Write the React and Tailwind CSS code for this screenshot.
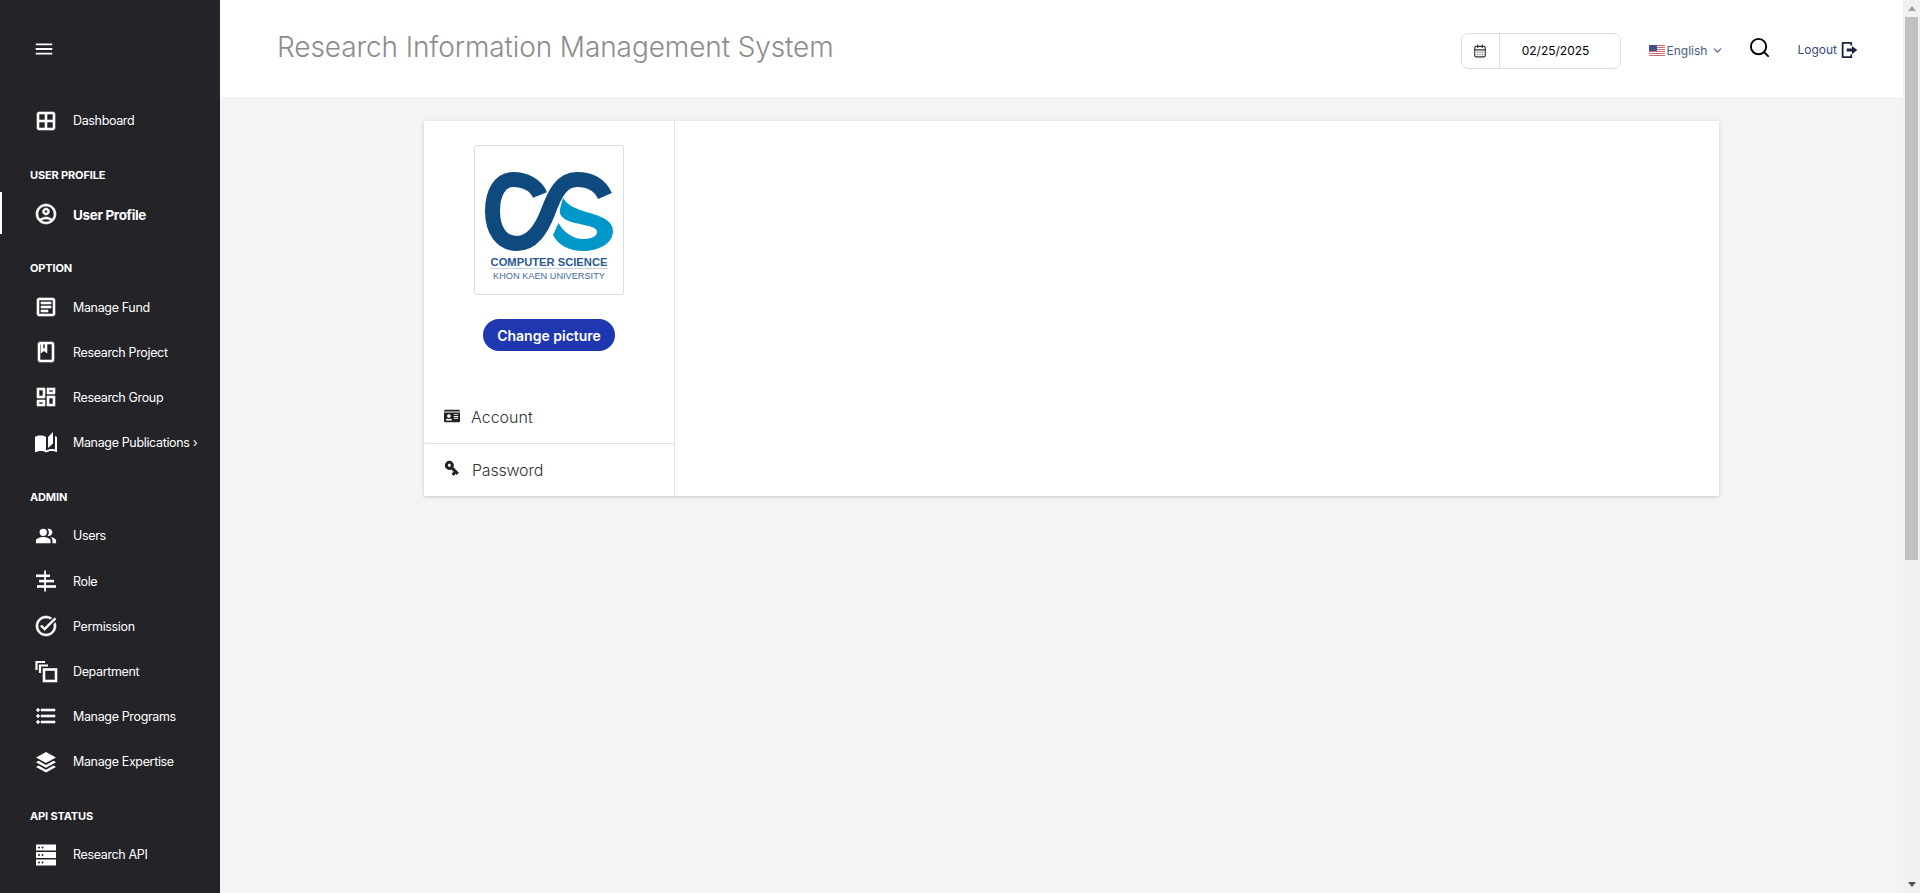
import {
  MdOutlineWindow,
  MdOutlineAccountCircle,
  MdOutlineArticle,
  MdOutlineBook,
  MdOutlineDashboard,
  MdAutoStories,
  MdPeopleAlt,
  MdOutlineTaskAlt,
  MdOutlineFormatListBulleted,
  MdMenu,
  MdVpnKey,
} from 'react-icons/md';
import { FaIdCard } from 'react-icons/fa';
import { Search, ChevronDown, CalendarDays } from 'lucide-react';

const RoleIcon = ({ className }) => (
  <svg viewBox="0 0 24 24" fill="currentColor" className={className}>
    <rect x="10.2" y="1.5" width="1.8" height="21" />
    <rect x="2" y="5.5" width="14" height="2.6" />
    <rect x="5" y="10.8" width="15" height="2.6" />
    <rect x="3" y="16.2" width="19" height="2.6" />
  </svg>
);

const DepartmentIcon = ({ className }) => (
  <svg viewBox="0 0 24 24" fill="none" stroke="currentColor" strokeWidth="2.2" className={className}>
    <path d="M2.5 11V3H11" />
    <path d="M6 14V6.5H14" />
    <rect x="10" y="10.5" width="12" height="11.5" strokeWidth="2.6" />
  </svg>
);

const ExpertiseIcon = ({ className }) => (
  <svg viewBox="0 0 24 24" fill="currentColor" className={className}>
    <path d="M12 2l10 5.5L12 13 2 7.5z" />
    <path d="M4.5 10.8L12 15l7.5-4.2L22 12.2 12 17.8 2 12.2z" />
    <path d="M4.5 15.6L12 19.8l7.5-4.2L22 17l-10 5.6L2 17z" />
  </svg>
);

const ApiIcon = ({ className }) => (
  <svg viewBox="0 0 24 24" className={className}>
    {[1.5, 9, 16.5].map((y) => (
      <g key={y}>
        <rect x="2" y={y} width="20" height="6" fill="#fff" />
        <circle cx="5" cy={y + 3} r="1" fill="#232328" />
        <circle cx="8.5" cy={y + 3} r="1" fill="#232328" />
      </g>
    ))}
  </svg>
);

const sidebar = [
  { items: [{ label: 'Dashboard', icon: MdOutlineWindow, bold: true }] },
  { title: 'USER PROFILE', items: [{ label: 'User Profile', icon: MdOutlineAccountCircle, active: true, bold: true }] },
  {
    title: 'OPTION',
    items: [
      { label: 'Manage Fund', icon: MdOutlineArticle, bold: true },
      { label: 'Research Project', icon: MdOutlineBook, bold: true },
      { label: 'Research Group', icon: MdOutlineDashboard, bold: true },
      { label: 'Manage Publications ›', icon: MdAutoStories },
    ],
  },
  {
    title: 'ADMIN',
    items: [
      { label: 'Users', icon: MdPeopleAlt, small: true },
      { label: 'Role', icon: RoleIcon },
      { label: 'Permission', icon: MdOutlineTaskAlt, bold: true },
      { label: 'Department', icon: DepartmentIcon },
      { label: 'Manage Programs', icon: MdOutlineFormatListBulleted, bold: true },
      { label: 'Manage Expertise', icon: ExpertiseIcon },
    ],
  },
  { title: 'API STATUS', items: [{ label: 'Research API', icon: ApiIcon }] },
];

const NavItem = ({ item }) => {
  const Icon = item.icon;
  return (
    <div className="relative flex h-[45.2px] items-center pl-[34px]">
      {item.active && <span className="absolute left-0 top-[1px] h-[42px] w-[2px] bg-white" />}
      <span className="flex h-[24px] w-[24px] shrink-0 items-center justify-center">
        <Icon className={`text-white ${item.small ? 'h-[22px] w-[22px]' : 'h-[24px] w-[24px]'} ${item.bold ? "[&_path:not([fill='none'])]:stroke-white [&_path:not([fill='none'])]:stroke-[0.6]" : ''}`} />
      </span>
      <span className={`ml-[15px] translate-y-[1px] whitespace-nowrap text-white ${item.active ? 'text-[13.5px] font-bold tracking-[-0.35px]' : 'text-[12.5px] tracking-[-0.35px]'}`}>
        {item.label}
      </span>
    </div>
  );
};

const Flag = () => (
  <svg width="16" height="12" viewBox="0 0 16 12" className="shrink-0">
    <rect width="16" height="12" fill="#fff" />
    {[0, 2, 4, 6, 8, 10].map((y) => (
      <rect key={y} y={y} width="16" height="1" fill="#d26a72" />
    ))}
    <rect width="8" height="6" fill="#45508a" />
  </svg>
);

const LogoutIcon = ({ className }) => (
  <svg viewBox="0 0 24 24" fill="none" className={className}>
    <path d="M15 5V2.5H3.5v19H15V19" stroke="currentColor" strokeWidth="2.4" strokeLinejoin="round" strokeLinecap="round" />
    <path d="M9 10h7V6.5l7 5.5-7 5.5V14H9z" fill="currentColor" />
  </svg>
);

const Logo = () => (
  <svg width="138" height="90" viewBox="0 0 138 90" className="block shrink-0">
    <path
      d="M60 30C56 20 45 14.5 33 14.5C20 14.5 12.5 28 12.5 46C12.5 66 22 78.5 37 78.5C52 78.5 61 65 68 47C75 28 82 14.5 97 14.5C110 14.5 120 20 125 31"
      fill="none"
      stroke="#0f4a7f"
      strokeWidth="15"
    />
    <path
      d="M83 33C88 41 97 44 106 47C122 51 133 56 133 66C133 79 118 86 103 86C89 86 78 80 73 70L78.5 58C84 68 94 74 103 74C112 74 117 71 117 67C117 62 108 61 100 59C90 57 78 54 80 44Z"
      fill="#0098c8"
    />
  </svg>
);

export default function App() {
  return (
    <div className="flex h-[893px] overflow-hidden bg-[#f3f4f6] font-['Inter',sans-serif]">
      <aside className="w-[220px] shrink-0 bg-[#232328]">
        <div className="flex h-[98px] items-center pl-[33px]">
          <MdMenu className="h-[22px] w-[22px] text-white" />
        </div>
        {sidebar.map((group) => (
          <div key={group.title || 'main'}>
            {group.title && (
              <div className="pb-[8px] pl-[30px] pt-[25px] text-[11px] font-bold leading-[15px] tracking-[-0.15px] text-white">{group.title}</div>
            )}
            {group.items.map((item) => (
              <NavItem key={item.label} item={item} />
            ))}
          </div>
        ))}
      </aside>

      <div className="min-w-0 flex-1">
        <header className="flex h-[97px] items-center bg-white pl-[57px] pr-[45px]">
          <h1 className="-translate-y-[2px] text-[28px] font-light tracking-[-0.1px] text-[#8f8b8b]">Research Information Management System</h1>
          <div className="ml-auto flex translate-y-[2px] items-center">
            <div className="flex h-[36px] w-[160px] items-center rounded-[7px] border border-[#dedede]">
              <div className="flex h-full w-[38px] items-center justify-center border-r border-[#dedede]">
                <CalendarDays className="h-[14px] w-[14px] text-[#333]" />
              </div>
              <span className="flex-1 pr-[8px] text-center text-[12px] text-black">02/25/2025</span>
            </div>
            <div className="ml-[28px] flex items-center gap-[2px] text-[12px] text-[#4a5a80]">
              <Flag />
              <span>English</span>
              <ChevronDown className="ml-[2px] h-[13px] w-[13px]" />
            </div>
            <Search className="ml-[24px] h-[23px] w-[23px] -translate-y-[3px] text-black" />
            <span className="ml-[26px] -translate-y-[1px] text-[12px] text-[#3b4a78]">Logout</span>
            <LogoutIcon className="ml-[3px] h-[18px] w-[18px] -translate-y-[1px] text-[#1a2340]" />
          </div>
        </header>

        <main className="pl-[204px] pt-[24px]">
          <div className="flex h-[375px] w-[1295px] bg-white shadow-[0_1px_4px_rgba(0,0,0,0.18)]">
            <div className="flex w-[251px] shrink-0 flex-col border-r border-[#e2e3e7]">
              <div className="flex flex-col items-center pt-[24px]">
                <div className="flex h-[150px] w-[150px] flex-col items-center rounded-[3px] border border-[#dcdde1] pt-[19px] font-['Liberation_Sans',sans-serif]">
                  <Logo />
                  <div className="mt-[1px] w-[118px] whitespace-nowrap border-b border-[#c4d2e0] text-center text-[11.2px] font-bold leading-[12px] text-[#2c5a8f]">COMPUTER SCIENCE</div>
                  <div className="mt-[2px] whitespace-nowrap text-[9.2px] leading-[10px] text-[#3f6a9a]">KHON KAEN UNIVERSITY</div>
                </div>
                <button className="mt-[24px] h-[32px] w-[132px] rounded-full bg-[#1f37b0] text-[14px] font-semibold text-white">
                  Change picture
                </button>
              </div>
              <div className="mt-auto">
                <div className="flex h-[53px] items-center border-b border-[#e0e1e5] pl-[20px]">
                  <FaIdCard className="h-[16px] w-[16px] -translate-y-[1px] text-[#222]" />
                  <span className="ml-[11px] text-[16px] font-light text-[#333]">Account</span>
                </div>
                <div className="flex h-[52px] items-center pl-[20px]">
                  <MdVpnKey className="h-[18px] w-[18px] -translate-x-[1px] -translate-y-[2px] rotate-45 text-[#222]" />
                  <span className="ml-[10px] text-[16px] font-light tracking-[-0.2px] text-[#333]">Password</span>
                </div>
              </div>
            </div>
            <div className="flex-1" />
          </div>
        </main>
      </div>

      {/* page scrollbar */}
      <div className="flex w-[17px] shrink-0 flex-col items-center bg-[#f1f1f1]">
        <span className="mt-[6px] h-0 w-0 border-x-[4px] border-b-[5px] border-x-transparent border-b-[#a3a3a3]" />
        <div className="mt-[6px] h-[543px] w-[13px] bg-[#c1c1c1]" />
        <span className="mb-[6px] mt-auto h-0 w-0 border-x-[4px] border-t-[5px] border-x-transparent border-t-[#505050]" />
      </div>
    </div>
  );
}
